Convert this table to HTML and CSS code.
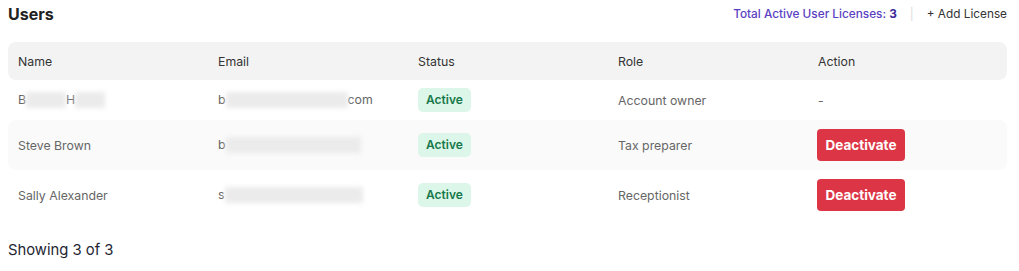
FILE: index.html
```html
<!DOCTYPE html>
<html lang="en">
<head>
    <meta charset="UTF-8">
    <title>Users</title>
    <link rel="stylesheet" href="styles.css">
</head>
<body>
<div class="page">
    <div class="topbar">
        <h1 class="title">Users</h1>
        <div class="licenses">
            <span class="total">Total Active User Licenses: <b>3</b></span>
            <span class="sep">|</span>
            <a class="add" href="#">+ Add License</a>
        </div>
    </div>

    <div class="table">
        <div class="row head">
            <div>Name</div>
            <div>Email</div>
            <div>Status</div>
            <div>Role</div>
            <div>Action</div>
        </div>
        <div class="row short">
            <div>B<span class="blur w40"></span>H<span class="blur w30"></span></div>
            <div>b<span class="blur w120"></span>com</div>
            <div><span class="badge">Active</span></div>
            <div>Account owner</div>
            <div>-</div>
        </div>
        <div class="row striped">
            <div>Steve Brown</div>
            <div>b<span class="blur w135"></span></div>
            <div><span class="badge">Active</span></div>
            <div>Tax preparer</div>
            <div><button class="btn-danger">Deactivate</button></div>
        </div>
        <div class="row">
            <div>Sally Alexander</div>
            <div>s<span class="blur w138"></span></div>
            <div><span class="badge">Active</span></div>
            <div>Receptionist</div>
            <div><button class="btn-danger">Deactivate</button></div>
        </div>
    </div>

    <p class="count">Showing 3 of 3</p>
</div>
</body>
</html>
```

FILE: styles.css
```css
body {
    font-family: Inter, "Noto Sans", Arial, sans-serif;
    margin: 0;
    background-color: #fff;
    color: #666;
}

.page {
    padding: 0 12px 0 8px;
}

.topbar {
    height: 28px;
    display: flex;
    align-items: center;
    justify-content: space-between;
    margin-bottom: 14px;
}

.title {
    margin: 0;
    font-size: 16px;
    font-weight: 700;
    color: #222;
}

.licenses {
    display: flex;
    align-items: center;
    font-size: 11.8px;
}

.total {
    color: #5b3fc2;
    font-weight: 500;
}

.total b {
    color: #3b2a9a;
}

.sep {
    color: #ddd;
    margin: 0 13px;
}

.add {
    color: #333;
    text-decoration: none;
}

.table {
    width: 999px;
}

.row {
    display: grid;
    grid-template-columns: repeat(5, 200px);
    align-items: center;
    padding-left: 10px;
    height: 50px;
    font-size: 12.3px;
    border-radius: 8px;
}

.row.head {
    height: 38px;
    background-color: #f3f3f3;
    color: #333;
}

.row.short {
    height: 40px;
}

.row.striped {
    background-color: #fafafa;
}

.blur {
    display: inline-block;
    height: 16px;
    vertical-align: middle;
    background-color: #ebebeb;
    filter: blur(2.5px);
}

.w30 { width: 30px; }
.w40 { width: 40px; }
.w120 { width: 122px; }
.w135 { width: 135px; }
.w138 { width: 138px; }

.badge {
    display: inline-block;
    padding: 0 8px;
    height: 24px;
    line-height: 24px;
    border-radius: 5px;
    background-color: #dcf6e9;
    color: #17784a;
    font-weight: 600;
    font-size: 12px;
}

.btn-danger {
    font-family: inherit;
    height: 32px;
    width: 88px;
    margin-left: -1px;
    border: none;
    border-radius: 4px;
    background-color: #dc3545;
    color: #fff;
    font-weight: 700;
    font-size: 13.5px;
    cursor: pointer;
}

.count {
    margin: 21px 0 0;
    font-size: 14.8px;
    color: #1f2633;
}
```
